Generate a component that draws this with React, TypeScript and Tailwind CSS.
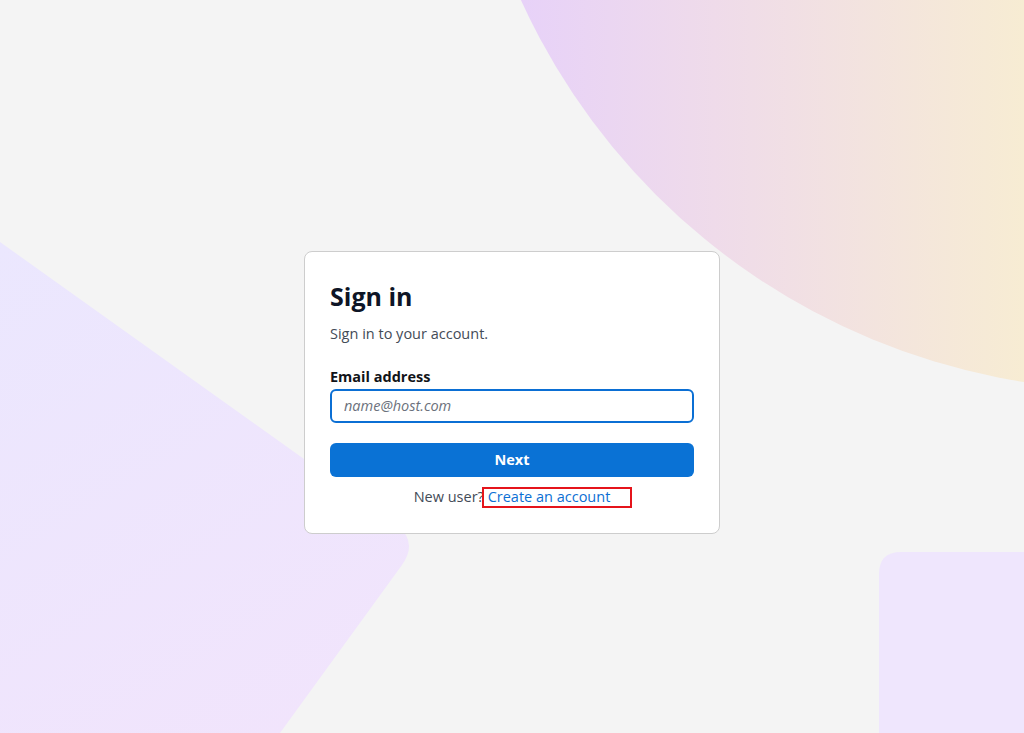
import { useState } from "react";

function Backdrop() {
  return (
    <svg
      className="absolute inset-0 w-full h-full pointer-events-none"
      viewBox="0 0 1024 733"
      preserveAspectRatio="none"
    >
      <defs>
        <linearGradient id="orb" x1="460" y1="0" x2="1024" y2="0" gradientUnits="userSpaceOnUse">
          <stop offset="0" stopColor="#e5cffd" />
          <stop offset="0.45" stopColor="#efdbea" />
          <stop offset="1" stopColor="#f7ecd3" />
        </linearGradient>
        <linearGradient id="slab" x1="0" y1="240" x2="300" y2="733" gradientUnits="userSpaceOnUse">
          <stop offset="0" stopColor="#ebe7fe" />
          <stop offset="1" stopColor="#f1e4fc" />
        </linearGradient>
      </defs>
      <circle cx="1127" cy="-276" r="666" fill="url(#orb)" />
      <path d="M0 242 L395 524 Q419 541 402 565 L280 733 L0 733 Z" fill="url(#slab)" />
      <path d="M879 733 L879 574 Q879 552 901 552 L1024 552 L1024 733 Z" fill="#efe6fd" />
    </svg>
  );
}

export default function App() {
  const [email, setEmail] = useState("");

  return (
    <div
      className="relative min-h-screen overflow-hidden bg-[#f4f4f4] flex justify-center items-center pt-[51px]"
      style={{ fontFamily: '"Open Sans", "Liberation Sans", sans-serif' }}
    >
      <Backdrop />
      <div className="relative w-[416px] bg-white border border-[#cdcdcd] rounded-lg px-[25px] pt-[28px] pb-[25px]">
        <h1 className="text-[25px] leading-[32px] font-bold text-[#0e1526]">Sign in</h1>
        <p className="mt-[11px] text-[14.5px] leading-[22px] text-[#434b57]">Sign in to your account.</p>

        <label className="block mt-[21px] text-[14.5px] leading-[22px] font-bold text-[#111318]">
          Email address
        </label>
        <input
          className="mt-[1px] block w-full h-[34px] px-[12px] border-2 border-[#0b6fd4] rounded-md text-[14.5px] outline-none placeholder:italic placeholder:text-[#6b717c]"
          type="email"
          value={email}
          placeholder="name@host.com"
          onChange={(e) => setEmail(e.target.value)}
        />

        <button className="mt-[20px] w-full h-[34px] rounded-md bg-[#0a72d5] text-white text-[14.5px] font-bold">
          Next
        </button>

        <p className="mt-[9px] text-center text-[14.5px] leading-[22px] text-[#434b57]">
          New user?{" "}
          <a href="#" className="relative text-[#0b6fd4]">
            Create an account
            <span className="absolute left-[-6px] top-0 w-[150px] h-[21px] border-2 border-[#e5141b]" />
          </a>
        </p>
      </div>
    </div>
  );
}
